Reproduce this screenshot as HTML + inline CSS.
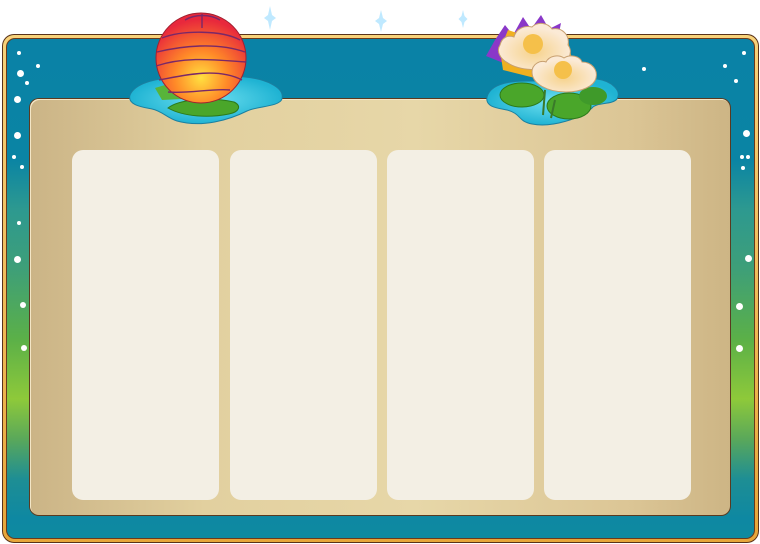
<!DOCTYPE html>
<html><head><style>
*{margin:0;padding:0;box-sizing:border-box}
body{width:760px;height:544px;background:#fff;position:relative;overflow:hidden;font-family:"Liberation Sans",sans-serif}
.outer{position:absolute;left:2px;top:34px;width:757px;height:509px;border-radius:12px;background:#5a3318;padding:1px}
.gold{width:100%;height:100%;border-radius:11px;background:linear-gradient(#f7d27a,#e7a63a);padding:3px}
.dark{width:100%;height:100%;border-radius:9px;background:#6a3a1a;padding:1px}
.teal{position:relative;width:100%;height:100%;border-radius:8px;background:linear-gradient(to bottom,#0a82a6 0,#0a84a4 120px,#2d9990 170px,#3e9f78 230px,#5bb048 300px,#8ec93a 360px,#5aa85a 400px,#1e8e94 440px,#0e88a2 480px,#0e8aa0 100%);overflow:hidden}
.panel{position:absolute;left:29px;top:98px;width:702px;height:418px;border-radius:10px;background:#5a3a20;padding:1px}
.panel-in{width:100%;height:100%;border-radius:9px;background:linear-gradient(to right,#cbb486 0,#e2d09f 25%,#e7d7a8 55%,#dcc696 85%,#cdb585 100%);box-shadow:inset 1px 1px 0 #f3e6c6}
.col{position:absolute;top:150px;width:147px;height:350px;border-radius:11px;background:#f3efe4}
.dot{position:absolute;background:#fff;border-radius:50%}
</style></head><body>
<div class="outer"><div class="gold"><div class="dark"><div class="teal">
</div></div></div></div>
<div class="panel"><div class="panel-in"></div></div>
<div class="col" style="left:72px"></div>
<div class="col" style="left:230px"></div>
<div class="col" style="left:387px"></div>
<div class="col" style="left:544px"></div>
<div class="dot" style="left:17px;top:51px;width:4px;height:4px"></div>
<div class="dot" style="left:36px;top:64px;width:4px;height:4px"></div>
<div class="dot" style="left:17px;top:70px;width:7px;height:7px"></div>
<div class="dot" style="left:25px;top:81px;width:4px;height:4px"></div>
<div class="dot" style="left:14px;top:96px;width:7px;height:7px"></div>
<div class="dot" style="left:14px;top:132px;width:7px;height:7px"></div>
<div class="dot" style="left:12px;top:155px;width:4px;height:4px"></div>
<div class="dot" style="left:20px;top:165px;width:4px;height:4px"></div>
<div class="dot" style="left:17px;top:221px;width:4px;height:4px"></div>
<div class="dot" style="left:14px;top:256px;width:7px;height:7px"></div>
<div class="dot" style="left:20px;top:302px;width:6px;height:6px"></div>
<div class="dot" style="left:21px;top:345px;width:6px;height:6px"></div>
<div class="dot" style="left:642px;top:67px;width:4px;height:4px"></div>
<div class="dot" style="left:723px;top:64px;width:4px;height:4px"></div>
<div class="dot" style="left:742px;top:51px;width:4px;height:4px"></div>
<div class="dot" style="left:734px;top:79px;width:4px;height:4px"></div>
<div class="dot" style="left:743px;top:130px;width:7px;height:7px"></div>
<div class="dot" style="left:746px;top:155px;width:4px;height:4px"></div>
<div class="dot" style="left:741px;top:166px;width:4px;height:4px"></div>
<div class="dot" style="left:740px;top:155px;width:4px;height:4px"></div>
<div class="dot" style="left:745px;top:255px;width:7px;height:7px"></div>
<div class="dot" style="left:736px;top:303px;width:7px;height:7px"></div>
<div class="dot" style="left:736px;top:345px;width:7px;height:7px"></div>
<svg width="760" height="544" style="position:absolute;left:0;top:0">
 <defs>
  <radialGradient id="lan" cx="0.5" cy="0.72" r="0.65"><stop offset="0" stop-color="#ffe040"/><stop offset="0.45" stop-color="#ff8a28"/><stop offset="1" stop-color="#e8283c"/></radialGradient>
  <radialGradient id="wat"><stop offset="0" stop-color="#6fe0f0"/><stop offset="1" stop-color="#1fb3d3"/></radialGradient>
  <radialGradient id="pet" cx="0.5" cy="0.6"><stop offset="0" stop-color="#f6d28a"/><stop offset="1" stop-color="#fbead6"/></radialGradient>
 </defs>
 <g fill="#bfe9ff"><path d="M270 6l2 9 4 3-4 3-2 9-2-9-4-3 4-3z"/><path d="M381 10l2 8 4 3-4 3-2 8-2-8-4-3 4-3z"/><path d="M463 10l1.5 6 3 3-3 3-1.5 6-1.5-6-3-3 3-3z"/></g>
 <path d="M130 95c5-12 25-16 45-18 30-3 50-2 70 0 20 2 40 10 37 22-3 8-25 7-35 12-18 9-45 17-70 10-10-3-15-10-25-12-10-2-25-4-22-14z" fill="url(#wat)" stroke="#1a7fa0" stroke-width="1"/>
 <path d="M155 88l20-6 35 4-8 12-40 2z" fill="#58b43a"/>
 <path d="M168 108c10-8 40-12 66-6 8 4 5 10-5 12-20 4-45 3-61-6z" fill="#4aa62a" stroke="#2c7a1a"/>
 <circle cx="201" cy="58" r="45" fill="url(#lan)" stroke="#a02030" stroke-width="1"/>
 <g fill="none" stroke="#7a2868" stroke-width="1.4">
  <path d="M162 38c20-8 60-8 78 2"/><path d="M157 52c25-6 60-10 88 0"/><path d="M156 66c30-10 60-6 90-4"/><path d="M159 80c30-6 60-12 83 0"/><path d="M168 92c20 2 45-4 62-2"/><path d="M185 20c10-6 25-6 35 0"/><path d="M202 14v14"/>
 </g>
 <path d="M487 97c3-12 20-16 40-16 25 0 55-4 70-2 15 2 25 12 20 20-5 6-20 3-25 9-10 10-40 20-60 16-15-3-10-10-25-14-10-2-22-3-20-13z" fill="url(#wat)" stroke="#1a7fa0"/>
 <ellipse cx="522" cy="95" rx="22" ry="12" fill="#4aa62a" stroke="#2c7a1a"/>
 <ellipse cx="569" cy="106" rx="22" ry="13" fill="#4aa62a" stroke="#2c7a1a"/>
 <ellipse cx="593" cy="96" rx="14" ry="9" fill="#3f9a2a"/>
 <path d="M545 90l-2 25M555 100l-4 18" stroke="#3a7a2a" stroke-width="2"/>
 <path d="M495 40l10-15 8 10 10-18 8 12 10-14 8 14 12-6-5 25-40 20-30-12z" fill="#8a38c8"/>
 <path d="M500 50l8-20 30 10 30 0 5 25-30 15-40-10z" fill="#f0b020"/>
 <path d="M500 45c2-8 8-10 14-8 2-8 10-12 18-10 6-6 16-4 20 2 10-2 18 6 16 16 6 8 0 18-12 22-14 4-36 4-48-4-8-4-12-12-8-18z" fill="url(#pet)" stroke="#c8a070"/>
 <circle cx="533" cy="44" r="10" fill="#f5c04a"/>
 <path d="M532 72c0-8 8-12 14-10 3-6 12-8 18-4 6-4 16-2 18 4 10 0 16 8 14 16-2 8-14 14-30 14-18 0-34-8-34-20z" fill="url(#pet)" stroke="#c8a070"/>
 <circle cx="563" cy="70" r="9" fill="#f5c04a"/>
</svg>
</body></html>
